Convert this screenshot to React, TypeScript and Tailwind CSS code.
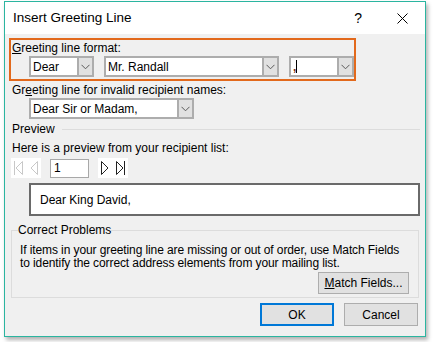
import React from "react";

const font = { fontFamily: '"Liberation Sans", Arial, sans-serif' };

function Chevron() {
  return (
    <svg width="9" height="6" viewBox="0 0 9 6" className="block">
      <path d="M0.5 0.8 L4.5 4.8 L8.5 0.8" fill="none" stroke="#5a5a5a" strokeWidth="1" />
    </svg>
  );
}

function Combo({ w, children }: { w: string; children: React.ReactNode }) {
  return (
    <div className={`${w} h-[21px] flex border-2 border-[#adadad] bg-white`}>
      <div className="flex-1 flex items-center pl-[2px] text-[12px] text-black overflow-hidden whitespace-nowrap">
        {children}
      </div>
      <div className="w-[15px] border-l-2 border-[#adadad] bg-[#e1e1e1] flex items-center justify-center">
        <Chevron />
      </div>
    </div>
  );
}

function NavIcon({ kind, color }: { kind: "first" | "prev" | "next" | "last"; color: string }) {
  const paths: Record<string, React.ReactNode> = {
    first: (
      <>
        <path d="M1.5 1 V15" stroke={color} strokeWidth="1" />
        <path d="M9.5 1.5 L3 8 L9.5 14.5 Z" fill="none" stroke={color} strokeWidth="1" />
      </>
    ),
    prev: <path d="M8.5 1.5 L2 8 L8.5 14.5 Z" fill="none" stroke={color} strokeWidth="1" />,
    next: <path d="M1.5 1.5 L8 8 L1.5 14.5 Z" fill="none" stroke={color} strokeWidth="1" />,
    last: (
      <>
        <path d="M1.5 1.5 L8 8 L1.5 14.5 Z" fill="none" stroke={color} strokeWidth="1" />
        <path d="M9.5 1 V15" stroke={color} strokeWidth="1" />
      </>
    ),
  };
  return (
    <svg width="11" height="16" viewBox="0 0 11 16" className="block">
      {paths[kind]}
    </svg>
  );
}

export default function App() {
  return (
    <div className="w-[433px] h-[342px] bg-white pl-[4px] pt-[1px]" style={font}>
      <div className="w-[422px] h-[336px] border border-[#2bb5a0] bg-[#f0f0f0] flex flex-col shadow-[2px_3px_4px_rgba(0,0,0,0.3)]">
        {/* Title bar */}
        <div className="h-[32px] bg-white flex items-center shrink-0">
          <span className="ml-[8px] text-[13.5px] text-black flex-1">Insert Greeting Line</span>
          <span className="text-[14px] text-black mr-[35px]">?</span>
          <svg width="11" height="11" viewBox="0 0 11 11" className="mr-[17px]">
            <path d="M0.5 0.5 L10.5 10.5 M10.5 0.5 L0.5 10.5" stroke="#000" strokeWidth="1" />
          </svg>
        </div>

        {/* Greeting line format */}
        <div className="ml-[4px] mt-[4px] w-[347px] h-[43px] border-2 border-[#e2691c] flex flex-col">
          <div className="ml-[1px] mt-[1px] text-[12px] leading-[15px] text-black">
            <span className="underline">G</span>reeting line format:
          </div>
          <div className="flex ml-[18px] gap-[10px]">
            <Combo w="w-[65px]">Dear</Combo>
            <Combo w="w-[175px]">Mr. Randall</Combo>
            <Combo w="w-[65px]">
              <span className="text-[#7a3418] font-bold">,</span>
              <span className="inline-block w-px h-[13px] bg-black"></span>
            </Combo>
          </div>
        </div>

        <div className="ml-[7px] mt-[2px] text-[12px] leading-[15px] text-black">
          Gr<span className="underline">e</span>eting line for invalid recipient names:
        </div>
        <div className="ml-[24px]">
          <Combo w="w-[165px]">Dear Sir or Madam,</Combo>
        </div>

        {/* Preview */}
        <div className="ml-[7px] mt-[3px] mr-[5px] flex items-center gap-[7px] text-[12px] leading-[15px] text-black">
          <span>Preview</span>
          <div className="flex-1 h-px bg-[#dcdcdc]"></div>
        </div>
        <div className="ml-[7px] mt-[4px] text-[12px] leading-[15px] text-black">
          Here is a preview from your recipient list:
        </div>
        <div className="ml-[6px] mt-[2px] flex items-center h-[20px]">
          <div className="w-[30px] h-[20px] bg-white flex items-center justify-center gap-[5px]">
            <NavIcon kind="first" color="#c8c8c8" />
            <NavIcon kind="prev" color="#c8c8c8" />
          </div>
          <div className="ml-[9px] w-[39px] h-[19px] border border-[#a8a8a8] bg-white flex items-center pl-[3px] text-[12px] text-black">
            1
          </div>
          <div className="ml-[9px] w-[30px] h-[20px] bg-white flex items-center justify-center gap-[4px]">
            <NavIcon kind="next" color="#222" />
            <NavIcon kind="last" color="#222" />
          </div>
        </div>
        <div className="ml-[24px] mt-[5px] w-[391px] h-[33px] border-2 border-[#6a6a6a] bg-white flex items-center pl-[9px] text-[12px] text-black">
          Dear King David,
        </div>

        {/* Correct Problems */}
        <fieldset className="ml-[6px] mt-[7px] w-[408px] h-[75px] border border-[#dcdcdc] pl-[6px] pr-[9px]">
          <legend className="text-[12px] leading-[15px] text-black">Correct Problems</legend>
          <div className="ml-[2px] mt-[6px] text-[12px] leading-[13px] tracking-[-0.1px] text-black whitespace-nowrap">
            <div>If items in your greeting line are missing or out of order, use Match Fields</div>
            <div>to identify the correct address elements from your mailing list.</div>
          </div>
          <div className="flex justify-end mt-[2px]">
            <button className="w-[91px] h-[22px] bg-[#e1e1e1] border border-[#adadad] text-[12px] text-black">
              <span className="underline">M</span>atch Fields...
            </button>
          </div>
        </fieldset>

        <div className="flex justify-end gap-[10px] mt-[5px] mr-[7px]">
          <button className="w-[74px] h-[23px] bg-[#e1e1e1] border-2 border-[#0078d7] text-[12px] text-black">
            OK
          </button>
          <button className="w-[74px] h-[23px] bg-[#e1e1e1] border border-[#adadad] text-[12px] text-black">
            Cancel
          </button>
        </div>
      </div>
    </div>
  );
}
